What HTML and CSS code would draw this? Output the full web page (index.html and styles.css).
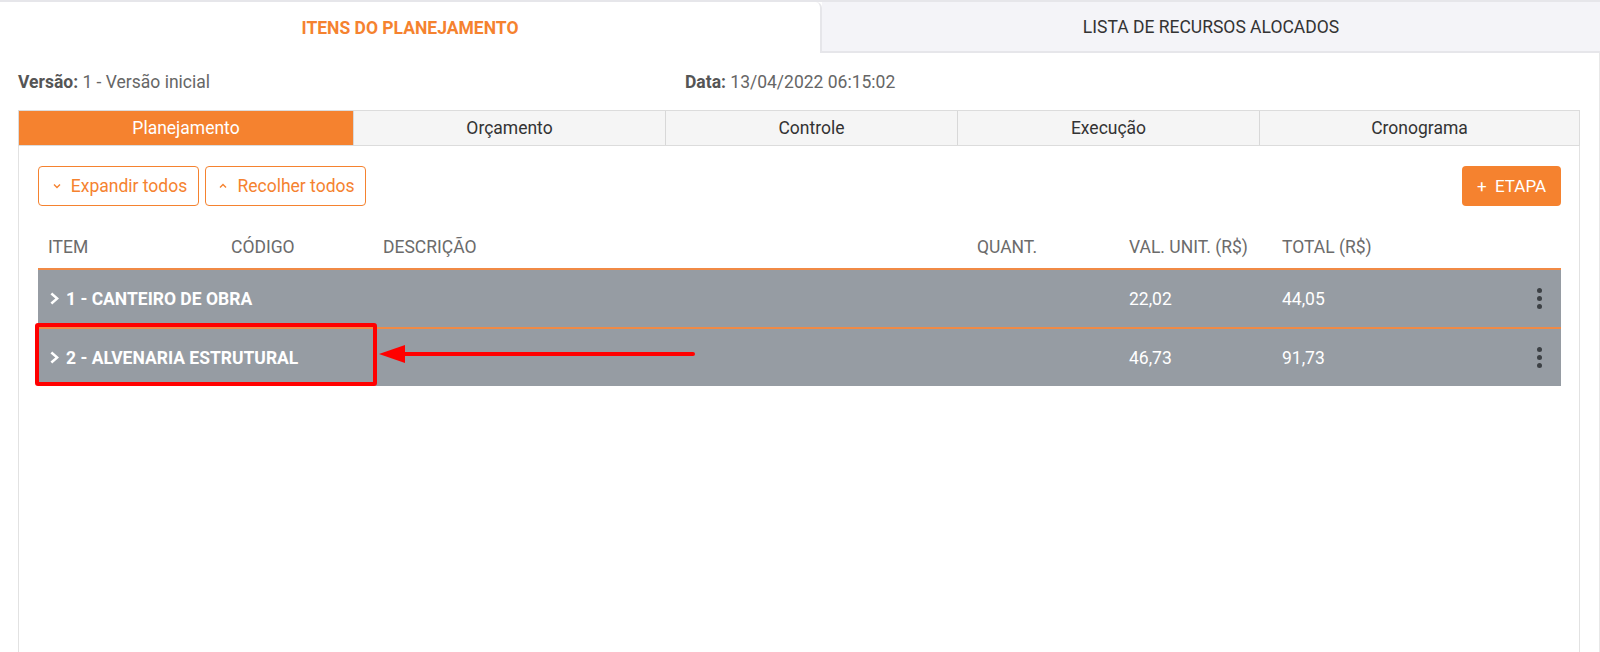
FILE: index.html
```html
<!DOCTYPE html>
<html lang="pt-BR">
<head>
<meta charset="utf-8">
<title>Itens do Planejamento</title>
<link rel="stylesheet" href="styles.css">
</head>
<body>
<div class="page">
  <div class="main-tabs">
    <div class="main-tab active">ITENS DO PLANEJAMENTO</div>
    <div class="main-tab">LISTA DE RECURSOS ALOCADOS</div>
  </div>
  <div class="body">
    <div class="info">
      <div class="info-item version"><b>Versão:</b> 1 - Versão inicial</div>
      <div class="info-item"><b>Data:</b> 13/04/2022 06:15:02</div>
    </div>
    <div class="sub-tabs">
      <div class="sub-tab active">Planejamento</div>
      <div class="sub-tab">Orçamento</div>
      <div class="sub-tab">Controle</div>
      <div class="sub-tab">Execução</div>
      <div class="sub-tab">Cronograma</div>
    </div>
    <div class="panel">
      <div class="toolbar">
        <div class="btn-group">
          <button class="btn-outline"><svg width="10" height="10" viewBox="0 0 10 10"><path d="M2 3.5 L5 6.5 L8 3.5" fill="none" stroke="#f5822f" stroke-width="1.4"/></svg>Expandir todos</button>
          <button class="btn-outline"><svg width="10" height="10" viewBox="0 0 10 10"><path d="M2 6.5 L5 3.5 L8 6.5" fill="none" stroke="#f5822f" stroke-width="1.4"/></svg>Recolher todos</button>
        </div>
        <button class="btn-primary">+&nbsp; ETAPA</button>
      </div>
      <div class="grid head">
        <div>ITEM</div>
        <div>CÓDIGO</div>
        <div>DESCRIÇÃO</div>
        <div>QUANT.</div>
        <div>VAL. UNIT. (R$)</div>
        <div>TOTAL (R$)</div>
        <div></div>
      </div>
      <div class="rows">
        <div class="grid row">
          <div class="name"><svg class="chev" width="10" height="13" viewBox="0 0 10 13"><path d="M2.2 0.5 L9 6.5 L2.2 12.5 L0.5 10.6 L5.3 6.5 L0.5 2.4 Z" fill="#fff"/></svg>1 - CANTEIRO DE OBRA</div>
          <div class="num">22,02</div>
          <div class="num">44,05</div>
          <div class="menu"><span></span><span></span><span></span></div>
        </div>
        <div class="grid row">
          <div class="name"><svg class="chev" width="10" height="13" viewBox="0 0 10 13"><path d="M2.2 0.5 L9 6.5 L2.2 12.5 L0.5 10.6 L5.3 6.5 L0.5 2.4 Z" fill="#fff"/></svg>2 - ALVENARIA ESTRUTURAL</div>
          <div class="num">46,73</div>
          <div class="num">91,73</div>
          <div class="menu"><span></span><span></span><span></span></div>
        </div>
        <div class="highlight"></div>
        <svg class="arrow" width="320" height="20" viewBox="0 0 320 20">
          <line x1="316" y1="10" x2="26" y2="10" stroke="#ff0000" stroke-width="4" stroke-linecap="round"/>
          <polygon points="2,10 28,1 28,19" fill="#ff0000"/>
        </svg>
      </div>
    </div>
  </div>
</div>
</body>
</html>
```

FILE: styles.css
```css
* { box-sizing: border-box; }
html, body { margin: 0; padding: 0; background: #fff; }
body {
  font-family: Roboto, "Liberation Sans", Arial, sans-serif;
  width: 1600px;
  height: 652px;
  overflow: hidden;
}
.page {
  height: 652px;
  display: flex;
  flex-direction: column;
  border-top: 2px solid #e6e6ea;
}
.main-tabs {
  display: flex;
  height: 51px;
  flex: none;
}
.main-tab {
  display: flex;
  align-items: center;
  justify-content: center;
  font-size: 17.5px;
}
.main-tab.active {
  width: 822px;
  color: #f5822f;
  font-weight: 700;
  background: #fff;
  border-right: 2px solid #e6e6ea;
  border-top-right-radius: 6px;
}
.main-tab:not(.active) {
  flex: 1;
  color: #333;
  font-weight: 400;
  background: #f4f4f8;
  border-bottom: 2px solid #e6e6ea;
}
.body {
  flex: 1;
  display: flex;
  flex-direction: column;
  border-right: 1px solid #e8e8e8;
}
.info {
  height: 57px;
  display: flex;
  align-items: center;
  padding-left: 18px;
  font-size: 17.5px;
  color: #666;
}
.info b { color: #555; font-weight: 700; }
.info-item.version { width: 667px; }
.sub-tabs {
  margin: 0 19px 0 18px;
  height: 36px;
  display: grid;
  grid-template-columns: 334px 312px 292px 302px 1fr;
  border: 1px solid #dcdcdc;
  background: #f5f5f5;
  flex: none;
}
.sub-tab {
  display: flex;
  align-items: center;
  justify-content: center;
  font-size: 17.5px;
  color: #333;
  border-left: 1px solid #d8d8d8;
}
.sub-tab:first-child { border-left: none; }
.sub-tab.active { background: #f5822f; color: #fff; }
.panel {
  flex: 1;
  margin: 0 19px 0 18px;
  border-left: 1px solid #e2e2e2;
  border-right: 1px solid #e2e2e2;
  padding: 20px 18px 0 19px;
}
.toolbar {
  display: flex;
  justify-content: space-between;
  height: 40px;
}
.btn-group { display: flex; gap: 6px; }
button {
  font-family: inherit;
  cursor: pointer;
}
.btn-outline {
  width: 161px;
  height: 40px;
  display: flex;
  align-items: center;
  justify-content: center;
  gap: 9px;
  border: 1.5px solid #f5822f;
  border-radius: 4px;
  background: #fff;
  color: #f5822f;
  font-size: 17.5px;
  padding: 0 0 0 2px;
}
.btn-primary {
  width: 99px;
  height: 40px;
  border: none;
  border-radius: 4px;
  background: #f5822f;
  color: #fff;
  font-size: 17px;
  padding: 0;
}
.grid {
  display: grid;
  grid-template-columns: 183px 152px 594px 152px 153px 1fr 40px;
  padding-left: 10px;
}
.head {
  margin-top: 20px;
  height: 42px;
  align-items: center;
  font-size: 17.5px;
  color: #6b6b6b;
}
.rows { position: relative; }
.row {
  height: 59px;
  align-items: center;
  background: #969ca3;
  border-top: 2px solid #f08a46;
  color: #fff;
  font-size: 17.5px;
  padding-left: 12px;
}
.row:last-of-type { border-bottom: 1px solid #e4e6e8; }
.row .name {
  grid-column: 1 / 5;
  font-weight: 700;
  display: flex;
  align-items: center;
  gap: 6px;
}
.row .num { margin-left: -2px; }
.row .menu {
  grid-column: 7;
  display: flex;
  flex-direction: column;
  align-items: center;
  gap: 3px;
  margin-left: -4px;
}
.menu span {
  width: 5px;
  height: 5px;
  border-radius: 50%;
  background: #3d4145;
}
.highlight {
  position: absolute;
  left: -3px;
  top: 55px;
  width: 342px;
  height: 63px;
  border: 4px solid #ff0000;
  border-radius: 3px;
}
.arrow {
  position: absolute;
  left: 339px;
  top: 76px;
}
```
